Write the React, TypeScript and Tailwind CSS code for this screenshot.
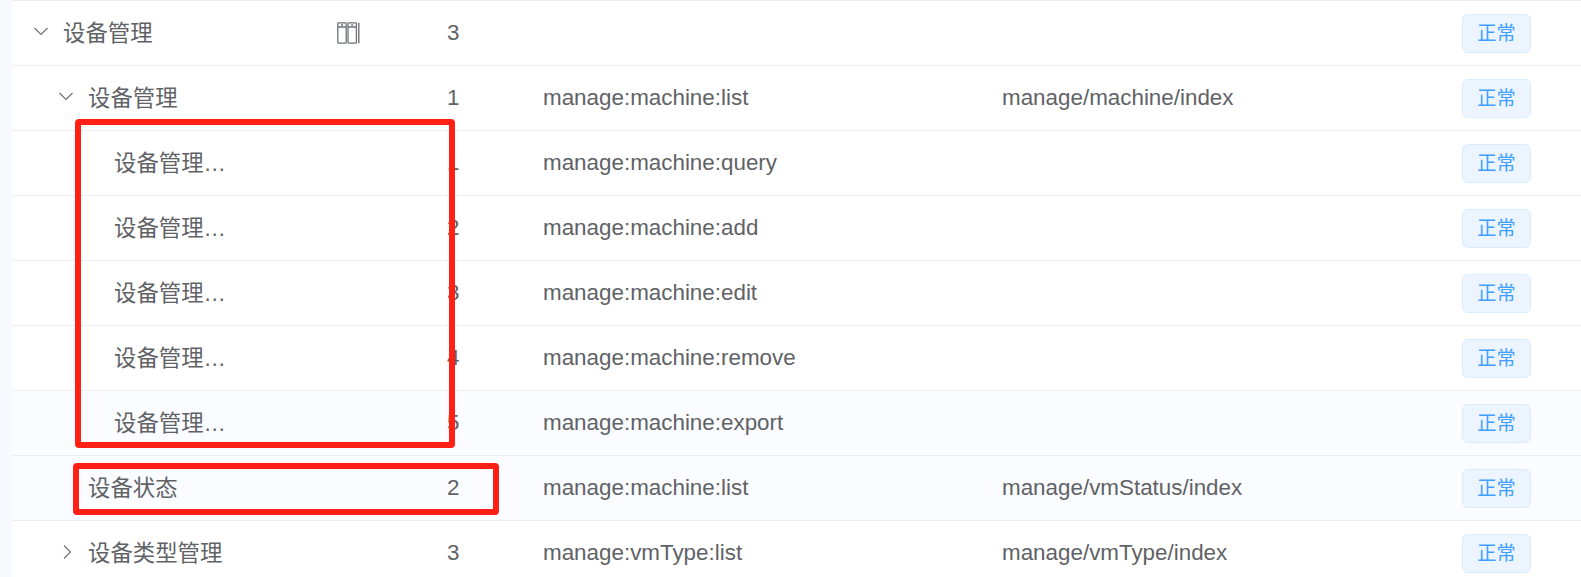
import React from "react";

const font = { fontFamily: '"Liberation Sans", "Noto Sans CJK SC", sans-serif' };

type Row = {
  name: string;
  level: number;
  arrow?: "down" | "right";
  icon?: boolean;
  order: string;
  perm?: string;
  comp?: string;
  tinted?: boolean;
};

const rows: Row[] = [
  { name: "设备管理", level: 0, arrow: "down", icon: true, order: "3" },
  { name: "设备管理", level: 1, arrow: "down", order: "1", perm: "manage:machine:list", comp: "manage/machine/index" },
  { name: "设备管理…", level: 2, order: "1", perm: "manage:machine:query" },
  { name: "设备管理…", level: 2, order: "2", perm: "manage:machine:add" },
  { name: "设备管理…", level: 2, order: "3", perm: "manage:machine:edit" },
  { name: "设备管理…", level: 2, order: "4", perm: "manage:machine:remove" },
  { name: "设备管理…", level: 2, order: "5", perm: "manage:machine:export", tinted: true },
  { name: "设备状态", level: 1, order: "2", perm: "manage:machine:list", comp: "manage/vmStatus/index", tinted: true },
  { name: "设备类型管理", level: 1, arrow: "right", order: "3", perm: "manage:vmType:list", comp: "manage/vmType/index" },
];

function Arrow({ dir }: { dir: "down" | "right" }) {
  return (
    <svg width="16" height="16" viewBox="0 0 16 16" fill="none" stroke="#6b6e75" strokeWidth="1.1">
      {dir === "down" ? <path d="M1.5 3 L8 9.5 L14.5 3" /> : <path d="M6 0.5 L12.5 7 L6 13.5" />}
    </svg>
  );
}

function BookIcon() {
  return (
    <svg width="23" height="22" viewBox="0 0 23 22" fill="none" stroke="#707378" strokeWidth="1.3">
      <rect x="0.8" y="0.8" width="8.4" height="20.4" rx="0.8" />
      <rect x="11" y="0.8" width="8.4" height="20.4" rx="0.8" />
      <path d="M0.8 5 H9.2 M11 5 H19.4" />
      <path d="M4 3 H6 M14.2 3 H16.2" />
      <path d="M21.8 0.8 V21.2" strokeWidth="1.4" />
    </svg>
  );
}

function TableRow({ r }: { r: Row }) {
  const pad = [21, 46, 102][r.level];
  return (
    <div className={`flex h-[65px] items-center border-b border-[#ebeef5] text-[22.4px] text-[#606266] ${r.tinted ? "bg-[#fafcff]" : "bg-white"}`}>
      <div className="flex w-[322px] shrink-0 items-center" style={{ paddingLeft: pad }}>
        {r.arrow ? (
          <span className="mr-[14px] flex w-[16px] justify-center"><Arrow dir={r.arrow} /></span>
        ) : r.level === 1 ? (
          <span className="w-[30px]" />
        ) : null}
        <span className="whitespace-nowrap pt-[2px]">{r.name}</span>
      </div>
      <div className="flex w-[113px] shrink-0 items-center pl-[3px]">{r.icon ? <BookIcon /> : null}</div>
      <div className="w-[96px] shrink-0">{r.order}</div>
      <div className="w-[459px] shrink-0">{r.perm}</div>
      <div className="w-[460px] shrink-0">{r.comp}</div>
      <div className="flex h-[39px] w-[69px] items-center justify-center rounded-[6px] border border-[#d9ecff] bg-[#ecf5ff] pt-[2px] text-[19.2px] text-[#409eff]">正常</div>
    </div>
  );
}

export default function App() {
  return (
    <div className="relative h-[577px] w-[1581px] overflow-hidden bg-[#f8f9ff] pl-[12px]" style={font}>
      <div className="border-t border-[#ebeef5] bg-white">
        {rows.map((r, i) => (
          <TableRow key={i} r={r} />
        ))}
      </div>
      <div className="absolute left-[75px] top-[119px] h-[329px] w-[380px] rounded-[4px] border-[6px] border-[#ff2015]" />
      <div className="absolute left-[73px] top-[463px] h-[52px] w-[426px] rounded-[4px] border-[6px] border-[#ff2015]" />
    </div>
  );
}
